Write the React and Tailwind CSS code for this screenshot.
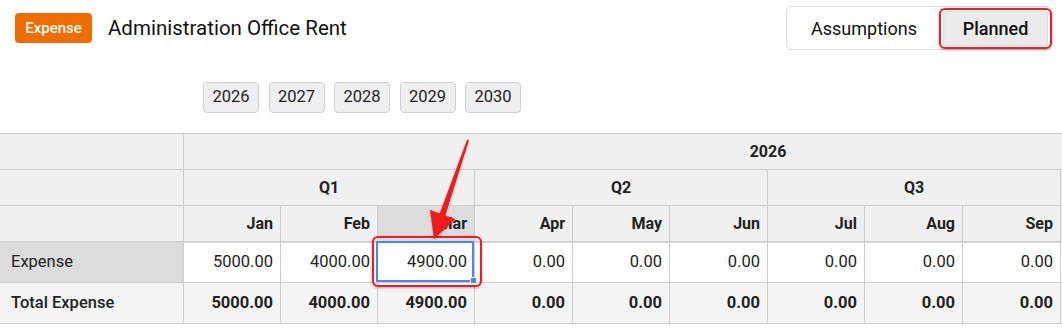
import React from "react";

const months = ["Jan","Feb","Mar","Apr","May","Jun","Jul","Aug","Sep","Oct","Nov","Dec"];
const expense = ["5000.00","4000.00","4900.00","0.00","0.00","0.00","0.00","0.00","0.00","0.00","0.00","0.00"];

export default function App() {
  return (
    <div className="relative w-[1062px] h-[328px] overflow-hidden bg-white text-[#222]" style={{ fontFamily: "Roboto, 'Liberation Sans', sans-serif" }}>
      {/* top bar */}
      <div className="flex items-center justify-between pl-[15px] pr-[10px] pt-[6px] h-[50px]">
        <div className="flex items-center gap-[16px]">
          <span className="flex items-center justify-center w-[77px] h-[30px] rounded-[4px] bg-[#ef6c00] text-white text-[15px] font-medium">Expense</span>
          <span className="text-[20.5px] text-[#111] leading-none pt-[1px]">Administration Office Rent</span>
        </div>
        <div className="flex items-center h-[44px] px-[3px] gap-[5px] border border-[#dcdcdc] rounded-[5px] bg-white">
          <button className="w-[148px] h-[35px] text-[18px] text-[#111]">Assumptions</button>
          <div className="relative">
            <button className="w-[105px] h-[35px] rounded-[4px] bg-[#ebebeb] text-[18px] font-medium text-[#111] shadow-[inset_0_0_2px_rgba(0,0,0,0.18)]">Planned</button>
            <div className="absolute -left-[4px] -top-[3px] -right-[4px] -bottom-[3px] border-2 border-[#ee1c25] rounded-[6px] shadow-[0_1px_3px_rgba(0,0,0,0.3)] pointer-events-none"></div>
          </div>
        </div>
      </div>

      {/* year buttons */}
      <div className="flex gap-[9.5px] ml-[203px] mt-[32px]">
        {["2026","2027","2028","2029","2030"].map((y) => (
          <button key={y} className="w-[56px] h-[31px] rounded-[4px] border border-[#d0d0d0] bg-[#efeff1] text-[16.5px] text-[#222]">{y}</button>
        ))}
      </div>

      {/* table */}
      <div className="mt-[20px] w-[1354px] border-t border-[#ccc] grid grid-cols-[184px_97px_97px_97px_98px_97px_98px_97px_98px_98px_97px_98px_97px] text-[16px]">
        {/* row 1 */}
        <div className="h-[36px] bg-[#f0f0f0] border-r border-b border-[#ccc]"></div>
        <div className="col-span-12 h-[36px] bg-[#f0f0f0] border-r border-b border-[#ccc] flex items-center justify-center font-bold">2026</div>
        {/* row 2 */}
        <div className="h-[36px] bg-[#f0f0f0] border-r border-b border-[#ccc]"></div>
        {["Q1","Q2","Q3","Q4"].map((q) => (
          <div key={q} className="col-span-3 h-[36px] bg-[#f0f0f0] border-r border-b border-[#ccc] flex items-center justify-center font-bold">{q}</div>
        ))}
        {/* row 3 */}
        <div className="h-[36px] bg-[#f0f0f0] border-r border-b border-[#ccc]"></div>
        {months.map((m) => (
          <div key={m} className={`h-[36px] border-r border-b border-[#ccc] flex items-center justify-end pr-[7px] font-bold ${m === "Mar" ? "bg-[#dcdcdc]" : "bg-[#f0f0f0]"}`}>{m}</div>
        ))}
        {/* expense row */}
        <div className="h-[41px] bg-[#dcdcdc] border-r border-b border-t border-t-[#d8d8d8] border-[#ccc] flex items-center pl-[11px] text-[16.5px]">Expense</div>
        {expense.map((v, i) => (
          <div key={i} className="relative h-[41px] bg-white border-r border-b border-t border-t-[#d8d8d8] border-[#ccc] flex items-center justify-end pr-[7px] text-[16.5px]">
            {v}
            {i === 2 && (
              <>
                <div className="absolute -left-[2px] -top-[2px] right-0 bottom-0 border-[2px] border-[#4a86f5] z-10"></div>
                <div className="absolute -right-[3px] -bottom-[2px] w-[7px] h-[7px] bg-[#4a86f5] border border-white z-20"></div>
                <div className="absolute -left-[6px] -top-[7px] -right-[8px] -bottom-[5px] border-2 border-[#ee1c25] rounded-[6px] shadow-[0_1px_3px_rgba(0,0,0,0.3)] z-20 pointer-events-none"></div>
              </>
            )}
          </div>
        ))}
        {/* total row */}
        <div className="h-[41px] bg-[#f4f4f4] border-r border-b border-[#ccc] flex items-center pl-[11px] font-medium text-[16.5px]">Total Expense</div>
        {expense.map((v, i) => (
          <div key={i} className="h-[41px] bg-[#f4f4f4] border-r border-b border-[#ccc] flex items-center justify-end pr-[7px] font-bold text-[16.5px]">{v}</div>
        ))}
      </div>

      {/* arrow annotation */}
      <svg className="absolute left-0 top-0 pointer-events-none z-30" width="1062" height="328" viewBox="0 0 1062 328">
        <polygon
          points="469,140.3 445.3,215.4 455.5,219 434,239 430,209.8 439.7,213.4 467.1,139.7"
          fill="#f01c1c"
          style={{ filter: "drop-shadow(0 1px 1px rgba(0,0,0,0.25))" }}
        />
      </svg>
    </div>
  );
}
